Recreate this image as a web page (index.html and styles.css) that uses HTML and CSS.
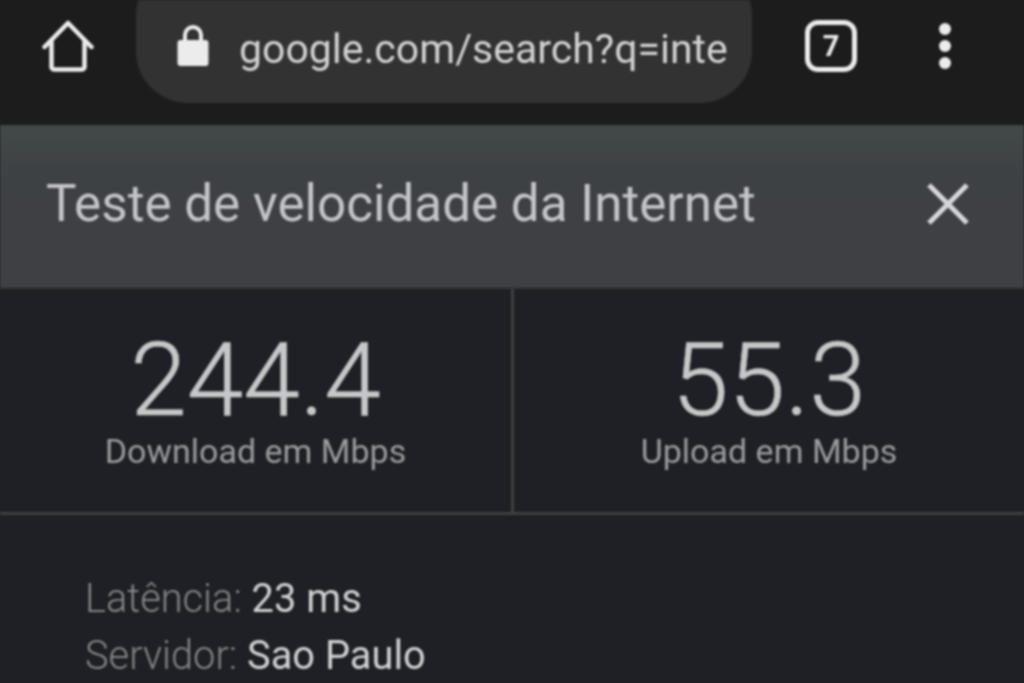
FILE: index.html
```html
<!DOCTYPE html>
<html lang="pt-BR">
<head>
    <meta charset="utf-8" />
    <title>Teste de velocidade da Internet</title>
    <link rel="stylesheet" href="styles.css">
</head>
<body>
    <header class="toolbar">
        <svg class="home-icon" width="52" height="54" viewBox="0 0 52 54" fill="none" stroke="#ececec" stroke-width="4.5" stroke-linejoin="round" stroke-linecap="round">
            <path d="M2.5 27 26 3 49.5 27" />
            <path d="M9.5 21V47a2.5 2.5 0 0 0 2.5 2.5H40a2.5 2.5 0 0 0 2.5-2.5V21" />
        </svg>
        <div class="omnibox">
            <svg class="lock-icon" width="32" height="42" viewBox="0 0 32 42">
                <path d="M8 18V10a8 8 0 0 1 16 0V18" fill="none" stroke="#ececec" stroke-width="4" />
                <rect x="0.5" y="15" width="31" height="26" rx="3" fill="#ececec" />
            </svg>
            <span class="url">google.com/search?q=inte</span>
        </div>
        <div class="tabs">7</div>
        <div class="menu">
            <span class="dot"></span>
            <span class="dot"></span>
            <span class="dot"></span>
        </div>
    </header>
    <section class="title-bar">
        <h1>Teste de velocidade da Internet</h1>
        <svg class="close-icon" width="42" height="42" viewBox="0 0 42 42" stroke="#d5d6d8" stroke-width="5">
            <path d="M2 2 40 40M40 2 2 40" />
        </svg>
    </section>
    <section class="stats">
        <div class="stat stat-first">
            <div class="value">244.4</div>
            <div class="label">Download em Mbps</div>
        </div>
        <div class="stat">
            <div class="value">55.3</div>
            <div class="label">Upload em Mbps</div>
        </div>
    </section>
    <section class="details">
        <p><span class="key">Latência:</span> 23 ms</p>
        <p><span class="key">Servidor:</span> Sao Paulo</p>
    </section>
</body>
</html>
```

FILE: styles.css
```css
html,
body {
    height: 100%;
}
body {
    margin: 0;
    overflow: hidden;
    background: #1f2025;
    font-family: Roboto, "Liberation Sans", sans-serif;
    filter: blur(0.8px);
}
.toolbar {
    display: flex;
    align-items: flex-start;
    height: 125px;
    padding-left: 42px;
    box-sizing: border-box;
    background: #1c1c1c;
    /* keeps the blur from fading out at the window edge */
    box-shadow: 0 0 0 4px #1c1c1c;
}
.home-icon {
    margin-top: 20px;
    flex: none;
}
.omnibox {
    display: flex;
    align-items: center;
    box-sizing: border-box;
    width: 616px;
    height: 140px;
    margin-top: -37px;
    margin-left: 42px;
    padding: 37px 0 0 41px;
    border-radius: 52px;
    background: #323232;
}
.lock-icon {
    flex: none;
    margin-top: -12px;
}
.url {
    margin-left: 30px;
    margin-top: -6px;
    font-size: 41px;
    color: #d2d2d2;
    white-space: nowrap;
}
.tabs {
    display: flex;
    align-items: center;
    justify-content: center;
    box-sizing: border-box;
    width: 52px;
    height: 52px;
    margin-top: 20px;
    margin-left: 53px;
    border: 5px solid #ececec;
    border-radius: 13px;
    font-size: 29px;
    font-weight: 700;
    color: #ececec;
}
.menu {
    display: flex;
    flex-direction: column;
    gap: 5px;
    margin-top: 23px;
    margin-left: 82px;
}
.dot {
    width: 12px;
    height: 12px;
    border-radius: 50%;
    background: #ececec;
}
.title-bar {
    display: flex;
    align-items: center;
    justify-content: space-between;
    box-sizing: border-box;
    height: 164px;
    padding: 0 55px 5px 46px;
    background: linear-gradient(#424948, #3e4144 30%, #3e4044);
    border-bottom: 2px solid #35363a;
    box-shadow: -4px 0 0 #3e4144, 4px 0 0 #3e4144;
}
h1 {
    margin: 0;
    font-size: 51.2px;
    font-weight: 400;
    color: #c2c4c7;
    white-space: nowrap;
}
.stats {
    display: grid;
    grid-template-columns: 514px 1fr;
    height: 226px;
    border-bottom: 3px solid #3f4043;
    box-sizing: border-box;
}
.stat {
    display: flex;
    flex-direction: column;
    align-items: center;
    padding-top: 41px;
}
.stat-first {
    border-right: 3px solid #3f4043;
}
.value {
    font-size: 102px;
    font-weight: 300;
    line-height: 101px;
    color: #c6c7c9;
    -webkit-text-stroke: 0.5px #c6c7c9;
}
.label {
    font-size: 34px;
    line-height: 40px;
    color: #9a9b9e;
}
.details {
    padding: 55px 0 0 85px;
    font-size: 39.8px;
    color: #d0d1d3;
}
.details p {
    margin: 0;
    line-height: 57px;
}
.key {
    font-weight: 300;
    color: #85868a;
}
```
